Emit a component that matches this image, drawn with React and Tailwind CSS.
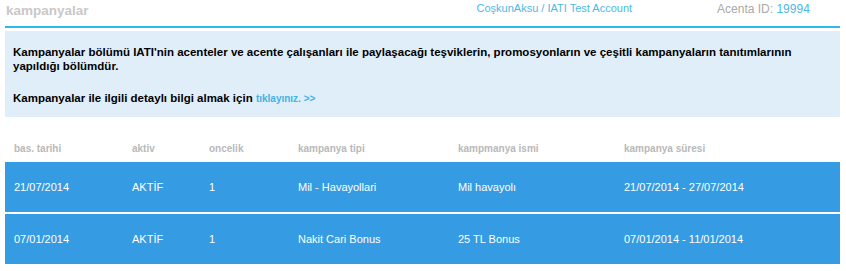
import React from "react";

const COLS = "grid grid-cols-[118px_77px_89px_160px_166px_1fr] pl-[9px]";

const HEADERS = ["bas. tarihi", "aktiv", "oncelik", "kampanya tipi", "kampmanya ismi", "kampanya süresi"];

const ROWS = [
  ["21/07/2014", "AKTİF", "1", "Mil - Havayollari", "Mil havayolı", "21/07/2014 - 27/07/2014"],
  ["07/01/2014", "AKTİF", "1", "Nakit Cari Bonus", "25 TL Bonus", "07/01/2014 - 11/01/2014"],
];

export default function App() {
  return (
    <div className="w-[846px] h-[271px] bg-white font-['Liberation_Sans',Arial,sans-serif] px-[5px] pr-[6px]">
      {/* Top bar */}
      <div className="flex items-start h-[28px] border-b-2 border-[#2bbbe8]">
        <h1 className="text-[13.5px] font-bold text-[#c8c8c8] mt-[3px] ml-[1px] leading-[16px]">kampanyalar</h1>
        <span className="ml-[388px] text-[11px] text-[#4fb8e6] leading-[14px] mt-[1px]">
          CoşkunAksu / IATI Test Account
        </span>
        <span className="ml-[85px] text-[12px] text-[#a9a9a9] leading-[14px] mt-[2px]">
          Acenta ID: <span className="text-[#4fb8e6]">19994</span>
        </span>
      </div>

      {/* Info panel */}
      <div className="mt-[3px] bg-[#dfeef9] h-[86px] pl-[8px] pt-[14px] text-[11.5px] font-bold text-black leading-[14px]">
        <p>
          Kampanyalar bölümü IATI'nin acenteler ve acente çalışanları ile paylaşacağı teşviklerin, promosyonların ve çeşitli kampanyaların tanıtımlarının yapıldığı bölümdür.
        </p>
        <p className="mt-[18px]">
          Kampanyalar ile ilgili detaylı bilgi almak için{" "}
          <a href="#" className="text-[10px] text-[#41b3e4]">tıklayınız. &gt;&gt;</a>
        </p>
      </div>

      {/* Table */}
      <div className={`${COLS} mt-[24px] h-[21px] text-[10px] font-bold text-[#b9b9b9]`}>
        {HEADERS.map((h) => (
          <div key={h}>{h}</div>
        ))}
      </div>
      <div className="flex flex-col gap-[2px]">
        {ROWS.map((row, i) => (
          <div key={i} className={`${COLS} items-center h-[50px] bg-[#359be2] text-[11px] text-white`}>
            {row.map((c, j) => (
              <div key={j}>{c}</div>
            ))}
          </div>
        ))}
      </div>
    </div>
  );
}
